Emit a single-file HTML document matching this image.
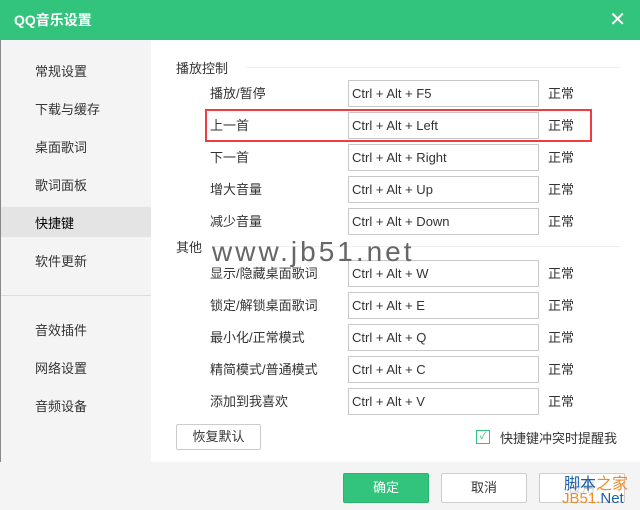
<!DOCTYPE html><html><head><meta charset="utf-8"><style>
*{margin:0;padding:0;box-sizing:border-box}
body{width:640px;height:510px;position:relative;overflow:hidden;background:#fff;font-family:"Liberation Sans","Noto Sans CJK SC",sans-serif;font-size:13px;color:#333}
.a{position:absolute}
.hd{left:0;top:0;width:640px;height:40px;background:#32c47c;color:#fff;font-size:14px;font-weight:bold;line-height:40px;padding-left:14px}
.side{left:0;top:40px;width:151px;height:422px;background:#f4f4f4;border-left:1px solid #888}
.si{position:absolute;left:34px;font-size:13px}
.inp{position:absolute;left:348px;width:191px;height:27px;border:1px solid #c8c8c8;line-height:25px;padding-left:3px;font-size:13px}
.lb{position:absolute;left:210px}
.ok{position:absolute;left:548px}
.ft{left:0;top:462px;width:640px;height:48px;background:#f4f4f4}
.btn{position:absolute;height:30px;border:1px solid #ccc;background:#fff;border-radius:2px;text-align:center;line-height:28px}
</style></head><body>
<div class="a hd">QQ音乐设置<span style="position:absolute;right:14px;top:0;font-size:20px;font-weight:normal">✕</span></div>
<div class="a side">
<div style="position:absolute;left:0;top:167px;width:150px;height:30px;background:#e4e4e4"></div>
<div style="position:absolute;left:0;top:255px;width:150px;height:1px;background:#ddd"></div>
<div class="si" style="top:21px">常规设置</div>
<div class="si" style="top:59px">下载与缓存</div>
<div class="si" style="top:97px">桌面歌词</div>
<div class="si" style="top:135px">歌词面板</div>
<div class="si" style="top:173px;color:#000">快捷键</div>
<div class="si" style="top:211px">软件更新</div>
<div class="si" style="top:280px">音效插件</div>
<div class="si" style="top:318px">网络设置</div>
<div class="si" style="top:356px">音频设备</div>
</div>
<div class="a" style="left:176px;top:58px">播放控制</div>
<div class="a" style="left:246px;top:67px;width:374px;height:1px;background:#eee"></div>
<div class="a" style="left:176px;top:237px">其他</div>
<div class="a" style="left:212px;top:246px;width:408px;height:1px;background:#eee"></div>
<div class="a" style="left:205px;top:109px;width:387px;height:33px;border:2px solid #f03c3c"></div>
<div class="lb" style="top:83px">播放/暂停</div><div class="inp" style="top:80px">Ctrl + Alt + F5</div><div class="ok" style="top:83px">正常</div>
<div class="lb" style="top:115px">上一首</div><div class="inp" style="top:112px">Ctrl + Alt + Left</div><div class="ok" style="top:115px">正常</div>
<div class="lb" style="top:147px">下一首</div><div class="inp" style="top:144px">Ctrl + Alt + Right</div><div class="ok" style="top:147px">正常</div>
<div class="lb" style="top:179px">增大音量</div><div class="inp" style="top:176px">Ctrl + Alt + Up</div><div class="ok" style="top:179px">正常</div>
<div class="lb" style="top:211px">减少音量</div><div class="inp" style="top:208px">Ctrl + Alt + Down</div><div class="ok" style="top:211px">正常</div>
<div class="lb" style="top:263px">显示/隐藏桌面歌词</div><div class="inp" style="top:260px">Ctrl + Alt + W</div><div class="ok" style="top:263px">正常</div>
<div class="lb" style="top:295px">锁定/解锁桌面歌词</div><div class="inp" style="top:292px">Ctrl + Alt + E</div><div class="ok" style="top:295px">正常</div>
<div class="lb" style="top:327px">最小化/正常模式</div><div class="inp" style="top:324px">Ctrl + Alt + Q</div><div class="ok" style="top:327px">正常</div>
<div class="lb" style="top:359px">精简模式/普通模式</div><div class="inp" style="top:356px">Ctrl + Alt + C</div><div class="ok" style="top:359px">正常</div>
<div class="lb" style="top:391px">添加到我喜欢</div><div class="inp" style="top:388px">Ctrl + Alt + V</div><div class="ok" style="top:391px">正常</div>
<div class="a" style="left:212px;top:236px;font-size:28px;color:#666;letter-spacing:3px;font-family:'Liberation Sans',sans-serif">www.jb51.net</div>
<div class="btn" style="left:176px;top:424px;width:85px;height:26px;line-height:24px">恢复默认</div>
<div class="a" style="left:476px;top:430px;width:14px;height:14px;border:1px solid #32c47c;color:#32c47c;font-size:10px;line-height:12px;text-align:center">✓</div>
<div class="a" style="left:500px;top:428px">快捷键冲突时提醒我</div>
<div class="a ft"></div>
<div class="btn" style="left:343px;top:473px;width:86px;background:#32c47c;border-color:#2bb371;color:#fff">确定</div>
<div class="btn" style="left:441px;top:473px;width:86px">取消</div>
<div class="btn" style="left:539px;top:473px;width:86px;color:#ccc">应用</div>
<div class="a" style="left:564px;top:470px;font-size:16px;color:#1a5fa8">脚本<span style="color:#f08a24">之家</span></div>
<div class="a" style="left:562px;top:490px;font-size:15px;color:#f08a24">JB51.<span style="color:#1a5fa8">Net</span></div>
</body></html>
